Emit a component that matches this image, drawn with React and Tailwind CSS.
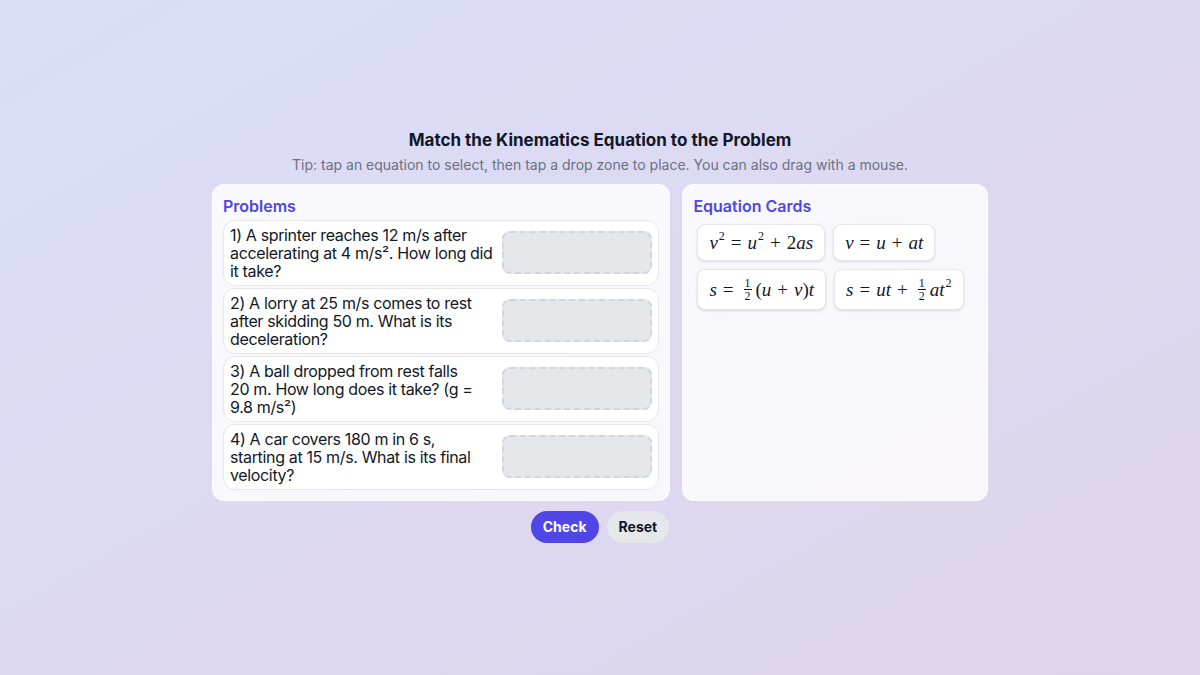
import React, { useState } from 'react';

// line breaks follow the reference wrap
const problems = [
  { id: 1, lines: ['1) A sprinter reaches 12 m/s after', 'accelerating at 4 m/s². How long did', 'it take?'] },
  { id: 2, lines: ['2) A lorry at 25 m/s comes to rest', 'after skidding 50 m. What is its', 'deceleration?'] },
  { id: 3, lines: ['3) A ball dropped from rest falls', '20 m. How long does it take? (g =', '9.8 m/s²)'] },
  { id: 4, lines: ['4) A car covers 180 m in 6 s,', 'starting at 15 m/s. What is its final', 'velocity?'] },
];

const Half = () => (
  <span className="inline-flex flex-col items-center align-middle mx-[4px] text-[12px] leading-[12px] not-italic">
    <span className="px-[1px]">1</span>
    <span className="w-full h-px bg-gray-900"></span>
    <span className="px-[1px]">2</span>
  </span>
);

const I = ({ children }) => <span className="italic">{children}</span>;
const Op = ({ children }) => <span className="not-italic mx-[6px]">{children}</span>;
const Sup = ({ children }) => <sup className="text-[12px] ml-[1px]">{children}</sup>;

const cards = [
  {
    id: 'a',
    node: (
      <>
        <I>v</I><Sup>2</Sup><Op>=</Op><I>u</I><Sup>2</Sup><Op>+</Op>2<I>as</I>
      </>
    ),
  },
  {
    id: 'b',
    node: (
      <>
        <I>v</I><Op>=</Op><I>u</I><Op>+</Op><I>at</I>
      </>
    ),
  },
  {
    id: 'c',
    node: (
      <>
        <I>s</I><Op>=</Op><Half />(<I>u</I><Op>+</Op><I>v</I>)<I>t</I>
      </>
    ),
  },
  {
    id: 'd',
    node: (
      <>
        <I>s</I><Op>=</Op><I>ut</I><Op>+</Op><Half /><I>at</I><Sup>2</Sup>
      </>
    ),
  },
];

export default function App() {
  const [selected, setSelected] = useState(null);

  return (
    <div
      className="min-h-screen w-full flex items-center justify-center bg-gradient-to-br from-[#dbdef9] to-[#dfd4ea] text-gray-900"
      style={{ fontFamily: 'Inter, "Liberation Sans", sans-serif' }}
    >
      <div className="w-[776px] flex flex-col items-center pb-[5px]">
        <h1 className="text-[17px] font-bold text-[#111827] leading-6">Match the Kinematics Equation to the Problem</h1>
        <p className="mt-[3px] text-[14px] text-gray-500 leading-5">
          Tip: tap an equation to select, then tap a drop zone to place. You can also drag with a mouse.
        </p>

        <div className="mt-[9px] w-full grid grid-cols-[3fr_2fr] gap-3">
          {/* Problems */}
          <div className="bg-white/80 rounded-xl border border-white/60 p-[10px]">
            <h2 className="text-[16px] font-semibold text-[#4f46e5] leading-5 mb-[4px] mt-[1px]">Problems</h2>
            <div className="flex flex-col gap-[2px]">
              {problems.map((p) => (
                <div
                  key={p.id}
                  className="bg-white rounded-xl border border-gray-200 px-[6px] py-[5px] flex items-center gap-2"
                >
                  <p className="flex-1 text-[16px] leading-[18px] tracking-[-0.35px] text-[#111827]">
                    {p.lines.map((l, i) => (
                      <span key={i} className="block">{l}</span>
                    ))}
                  </p>
                  <div className="w-[150px] h-[43px] rounded-lg border-2 border-dashed border-gray-300 bg-gray-200 shrink-0"></div>
                </div>
              ))}
            </div>
          </div>

          {/* Equation Cards */}
          <div className="bg-white/80 rounded-xl border border-white/60 p-[10px]">
            <h2 className="text-[16px] font-semibold text-[#4f46e5] leading-5 mb-[8px] mt-[1px]">Equation Cards</h2>
            <div className="flex flex-wrap gap-2 px-[4px]">
              {cards.map((c) => (
                <button
                  key={c.id}
                  onClick={() => setSelected(c.id)}
                  className={`bg-white rounded-lg border px-[11px] py-[7px] shadow-sm text-[19px] leading-[21px] flex items-center ${
                    selected === c.id ? 'border-indigo-500' : 'border-gray-200'
                  }`}
                  style={{ fontFamily: '"Liberation Serif", "DejaVu Serif", serif' }}
                >
                  {c.node}
                </button>
              ))}
            </div>
          </div>
        </div>

        <div className="mt-[10px] flex gap-2">
          <button className="bg-[#4f46e5] text-white text-[14px] font-bold rounded-full px-3 h-8">Check</button>
          <button className="bg-gray-200 text-gray-900 text-[14px] font-bold rounded-full px-3 h-8">Reset</button>
        </div>
      </div>
    </div>
  );
}
